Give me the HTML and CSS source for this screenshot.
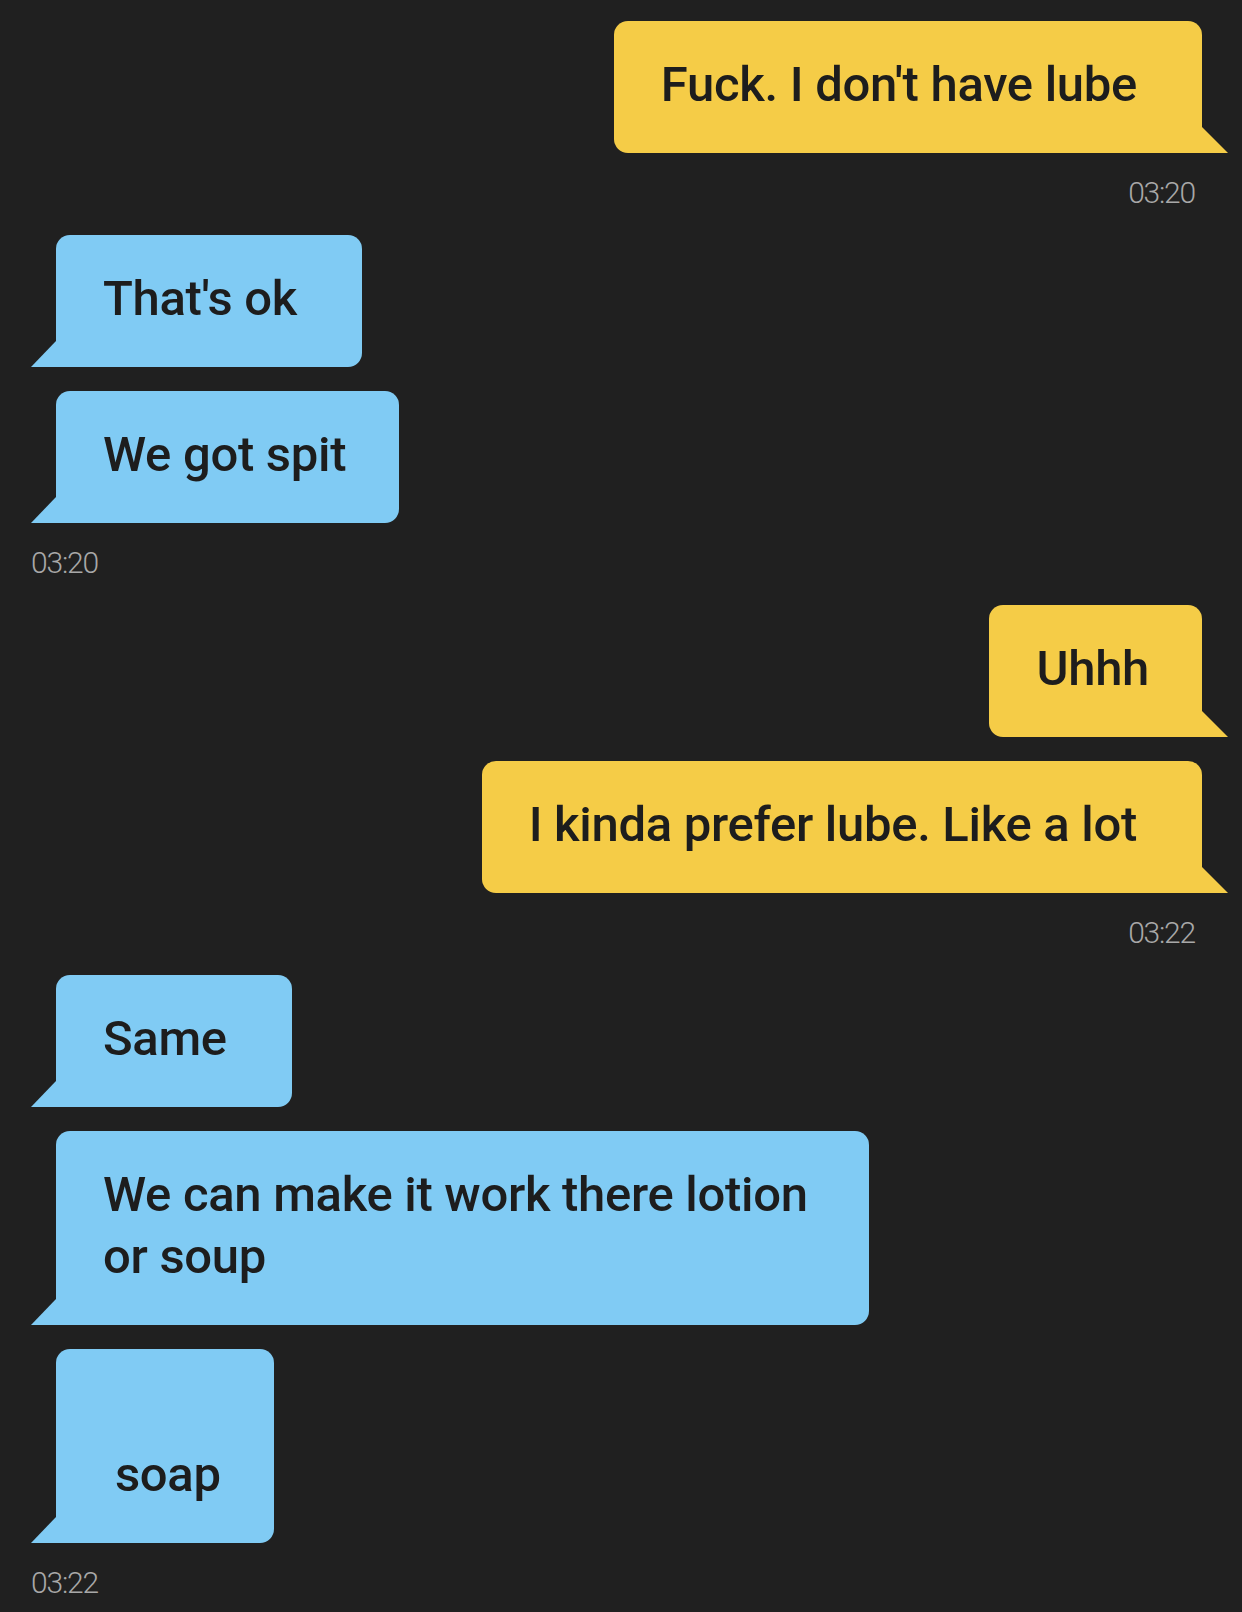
FILE: index.html
```html
<!DOCTYPE html>
<html lang="en">
<head>
<meta charset="utf-8">
<title>Chat</title>
<link rel="stylesheet" href="styles.css">
</head>
<body>
<main class="chat">
  <section class="group out">
    <div class="bubble">Fuck. I don't have lube</div>
    <div class="time">03:20</div>
  </section>
  <section class="group in">
    <div class="bubble">That's ok</div>
    <div class="bubble short">We got spit</div>
    <div class="time">03:20</div>
  </section>
  <section class="group out">
    <div class="bubble short">Uhhh</div>
    <div class="bubble">I kinda prefer lube. Like a lot</div>
    <div class="time">03:22</div>
  </section>
  <section class="group in">
    <div class="bubble">Same</div>
    <div class="bubble wide">We can make it work there lotion or soup</div>
    <div class="bubble short"><br>&nbsp;soap</div>
    <div class="time">03:22</div>
  </section>
</main>
</body>
</html>
```
FILE: styles.css
```css
html, body {
  margin: 0;
  padding: 0;
  background: #202020;
}

body {
  width: 1242px;
  height: 1612px;
  overflow: hidden;
  font-family: Roboto, "Liberation Sans", sans-serif;
}

.chat {
  display: flex;
  flex-direction: column;
  padding: 21px 40px 0 31px;
}

.group {
  display: flex;
  flex-direction: column;
}

.group.out {
  align-items: flex-end;
}

.group.in {
  align-items: flex-start;
}

.bubble {
  position: relative;
  box-sizing: border-box;
  max-width: 813px;
  padding: 33px 65px 37px 47px;
  font-size: 49px;
  font-weight: 500;
  line-height: 62px;
  letter-spacing: -0.3px;
  color: #1d1d1d;
  border-radius: 14px;
}

.bubble.short {
  padding-right: 53px;
}

.bubble.wide {
  padding-right: 36px;
}

.bubble + .bubble {
  margin-top: 24px;
}

.out .bubble {
  background: #f5cc47;
  border-bottom-right-radius: 0;
}

.out .bubble::after {
  content: "";
  position: absolute;
  right: -26px;
  bottom: 0;
  width: 26px;
  height: 26px;
  background: #f5cc47;
  clip-path: polygon(0 0, 100% 100%, 0 100%);
}

.in .bubble {
  margin-left: 25px;
  background: #80cbf4;
  border-bottom-left-radius: 0;
}

.in .bubble::after {
  content: "";
  position: absolute;
  left: -25px;
  bottom: 0;
  width: 25px;
  height: 26px;
  background: #80cbf4;
  clip-path: polygon(100% 0, 100% 100%, 0 100%);
}

.time {
  height: 40px;
  line-height: 40px;
  margin: 20px 0 22px;
  font-size: 30px;
  font-weight: 300;
  letter-spacing: -1.2px;
  color: #a8a8a8;
}

.out .time {
  margin-right: 7px;
}
```
